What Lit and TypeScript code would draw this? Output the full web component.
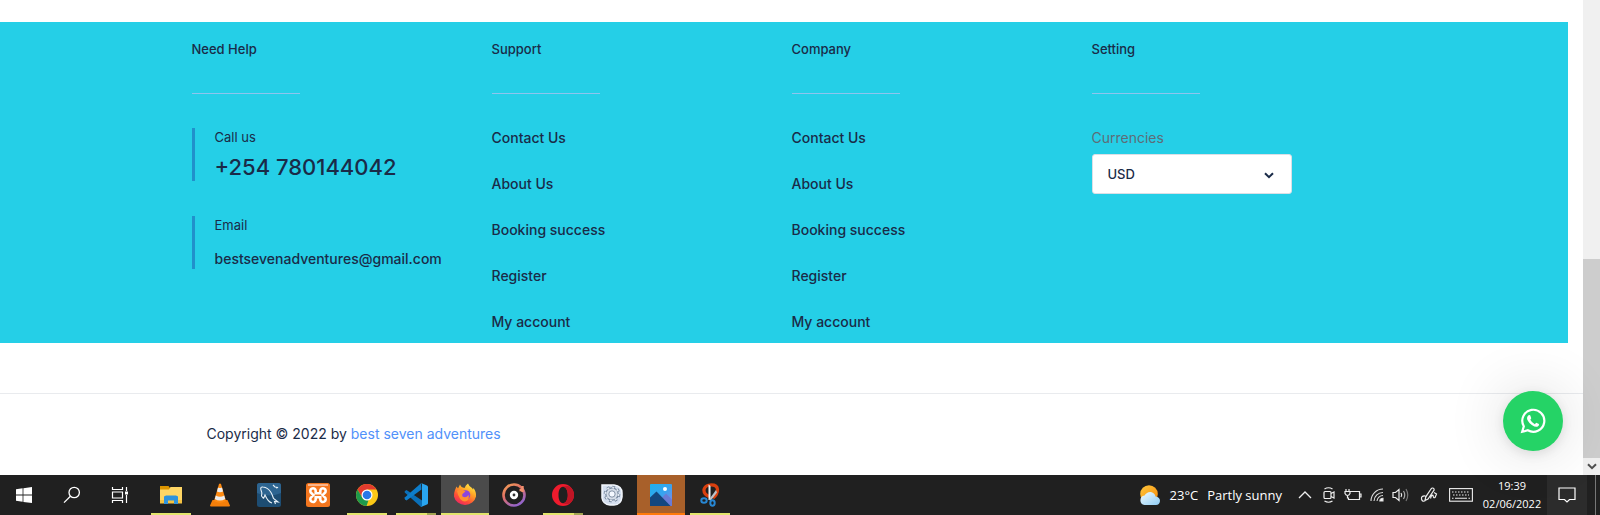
import { LitElement, html, css, svg } from "lit";
import { customElement, property } from "lit/decorators.js";
import { classMap } from "lit/directives/class-map.js";

const icons = {
  windows: svg`<svg width="16" height="16" viewBox="0 0 16 16" fill="#fff"><path d="M0 2.3 6.6 1.3V7.6H0zM7.4 1.2 16 0V7.6H7.4zM0 8.4H6.6V14.7L0 13.8zM7.4 8.4H16V16L7.4 14.9z"/></svg>`,
  search: svg`<svg width="18" height="18" viewBox="0 0 18 18" fill="none" stroke="#fff" stroke-width="1.3"><circle cx="11.2" cy="6.5" r="5.2"/><path d="M7.4 10.3 1 16.6"/></svg>`,
  taskview: svg`<svg width="18" height="16" viewBox="0 0 18 16" fill="none" stroke="#fff" stroke-width="1.2"><path d="M1.500 0V2.500H11.500V0M1.500 16V13.500H11.500V16M1.500 5H11.500V11H1.500zM15.500 0V4M15.500 8V16"/><path fill="#fff" stroke="none" d="M14 4.500h3v3h-3z"/></svg>`,
  explorer: svg`<svg width="24" height="20" viewBox="0 0 24 20"><path fill="#dc9500" d="M1 1h8.500l1.500 2v4H1z"/><path fill="#ffd665" d="M1 4.500 10 4.500 11.500 2H23V18H1z"/><path fill="#f5c242" d="M1 15h22v3.500H1z"/><path fill="#2f93dc" d="M5 19V11.500L7 10.500H17L19 11.500V19H15V15.500H9V19z"/></svg>`,
  vlc: svg`<svg width="22" height="24" viewBox="0 0 22 24"><path fill="#f57f0a" d="M3.500 17H18.500L21 22.500Q21 23.500 20 23.500H2Q1 23.500 1 22.500z"/><path fill="#ff8b12" d="M10 1Q11 0 12 1L17 18Q11 21.500 5 18z"/><path fill="#eceef0" d="M9 4.500 8 8.500Q11 10 14 8.500L13 4.500Q11 5.500 9 4.500zM6.800 12.500 5.800 16Q11 19 16.200 16L15.200 12.500Q11 15 6.800 12.500z"/></svg>`,
  mysql: svg`<svg width="24" height="24" viewBox="0 0 24 24"><rect width="24" height="24" rx="2.500" fill="#1d4d73"/><path fill="#2d6490" d="M2.500 0h19A2.500 2.500 0 0 1 24 2.500V10Q12 15 0 10V2.500A2.500 2.500 0 0 1 2.500 0z"/><path fill="none" stroke="#e8f1f8" stroke-width="1.100" d="M6.500 15.500 4.500 13Q5.500 10 4 7 3 3.500 6 4 11 4.500 14 9.500 15.500 12 16.500 15.500L21 19 17.500 18.500 18.500 21M6.500 15.500 8 12Q11 19 15 20M16 2l2 2 3 .5-2 .5"/></svg>`,
  xampp: svg`<svg width="24" height="24" viewBox="0 0 24 24"><rect width="24" height="24" rx="2.500" fill="#f3761f"/><path fill="#f9b48a" d="M2 1h20v2H2z"/><g fill="none" stroke="#fff" stroke-width="2.600"><path d="M9.700 10.300V8A2.700 2.700 0 1 0 5.500 10.200L7.300 12.100 5.500 14A2.700 2.700 0 1 0 9.700 16.200V14.200H14.300V16.200A2.700 2.700 0 1 0 18.500 14L16.700 12.100 18.500 10.200A2.700 2.700 0 1 0 14.300 8V10.300z"/></g></svg>`,
  chrome: svg`<svg width="22" height="22" viewBox="0 0 22 22"><circle cx="11" cy="11" r="11" fill="#fbc816"/><path fill="#e33b2e" d="M1.500 5.500A11 11 0 0 1 20.500 5.500H11L6.300 13.700z"/><path fill="#1d9a4c" d="M1.500 5.500 6.300 13.700Q8.500 17 12.500 16.200L10.500 22A11 11 0 0 1 1.500 5.500z"/><circle cx="11" cy="11" r="5.500" fill="#fff"/><circle cx="11" cy="11" r="4.300" fill="#2878e8"/></svg>`,
  vscode: svg`<svg width="24" height="24" viewBox="0 0 24 24"><path fill="#0a6fb8" d="M2.500 7 1 8Q0 9 1 9.800L17 24 18 23.700V17.500z"/><path fill="#0d7dcb" d="M17.500 6.500 2.500 17.500 1 16.300Q0 15.300 1 14.300L17 .2z"/><path fill="#29a5f0" d="M17 0 23 2.500Q24 3 24 4V20Q24 21 23 21.500L17 24Q18 23.500 18 22V2Q18 .5 17 0z"/></svg>`,
  firefox: svg`<svg width="24" height="24" viewBox="0 0 24 24"><defs><linearGradient id="ff" x1=".8" y1="0" x2=".2" y2="1"><stop stop-color="#fff14a"/><stop offset=".35" stop-color="#ffa726"/><stop offset=".7" stop-color="#ff4f35"/><stop offset="1" stop-color="#e9206b"/></linearGradient></defs><path fill="url(#ff)" d="M2 7 3.500 3.500 5 5.500 7 1.500Q8 4.500 11.500 5 12.500 2 15 .5 16 3.500 19 5L20 6.500 20.500 5Q23.500 9 23 13.500A11.200 10.500 0 0 1 1 13.500Q.8 10 2 7z"/><circle cx="12.500" cy="12" r="4.800" fill="#8b45dd"/><path fill="#ff9130" d="M4 8Q8 5.500 12.500 8.500L10 10.500Q8.500 11.500 9.500 13.500 13 15.500 15.500 12 17 17.500 12 18.500 6 18 4 8z"/></svg>`,
  groove: svg`<svg width="24" height="24" viewBox="0 0 24 24"><defs><linearGradient id="gr" x1="0" y1="0" x2=".6" y2="1"><stop stop-color="#f5a255"/><stop offset=".45" stop-color="#df6f65"/><stop offset="1" stop-color="#9564c8"/></linearGradient></defs><circle cx="12" cy="12" r="10.500" fill="none" stroke="url(#gr)" stroke-width="2.600"/><path fill="none" stroke="#f2916d" stroke-width="2.400" d="M17.500 7H21M20.500 3V9"/><circle cx="12" cy="12" r="2.800" fill="#333" stroke="#fff" stroke-width="2.800"/></svg>`,
  opera: svg`<svg width="22" height="22" viewBox="0 0 22 22"><path fill="#ef1b2d" fill-rule="evenodd" d="M11 0A11 11 0 1 0 11 22 11 11 0 0 0 11 0zM11 2.800C14 2.800 15.800 6.500 15.800 11S14 19.200 11 19.200 6.500 15.500 6.500 11 8 2.800 11 2.800z"/><path fill="#c01525" d="M11 2.800Q16 1 18.400 2.900 22 6.500 22 11T18.400 19.100Q16 21 11 19.200C14 19.200 15.800 15.500 15.800 11S14 2.800 11 2.800z"/></svg>`,
  gear: svg`<svg width="22" height="22" viewBox="0 0 22 22"><path fill="#d5dfef" stroke="#f2f6fc" stroke-width="1.500" d="M1 1H13Q21 2 21 9V13Q20 21 13 21H9Q2 20.500 1 14z"/><circle cx="11" cy="10" r="7" fill="none" stroke="#74859b" stroke-width="2.600" stroke-dasharray="2.750 2.750"/><circle cx="11" cy="10" r="4.800" fill="none" stroke="#74859b" stroke-width="4"/><circle cx="11" cy="10" r="6.600" fill="none" stroke="#e3e9f1" stroke-width="1.800" stroke-dasharray="2.100 3.080"/><circle cx="11" cy="10" r="4.500" fill="#f7faff" stroke="#d5dde8" stroke-width="2.200"/><circle cx="11" cy="10" r="3.200" fill="#f4f8ff" stroke="#7e8da2"/></svg>`,
  photos: svg`<svg width="22" height="22" viewBox="0 0 22 22"><defs><linearGradient id="ph" x1="0" y1="0" x2="1" y2="1"><stop stop-color="#1fb0ee"/><stop offset=".5" stop-color="#36a4ef"/><stop offset="1" stop-color="#8f82df"/></linearGradient></defs><rect width="22" height="22" rx="1" fill="url(#ph)"/><path fill="#6a7bd5" d="M10 16 16 9.500 22 15.500V22H10z"/><path fill="#14477f" d="M0 13.500 6.500 7.500 20.500 22H0z"/><circle cx="15" cy="5" r="2" fill="#fff"/></svg>`,
  snip: svg`<svg width="20" height="24" viewBox="0 0 20 24"><path fill="none" stroke="#d9400f" stroke-width="3.200" d="M9 13.500Q3.500 11 4 6.500 5 2.500 10 2 17 1.500 17.500 6.500 17.500 11.500 13 15"/><path fill="#f1f3f5" d="M8.500 1.500 10.500 3V17H8.500z"/><path fill="#b9c1c9" d="M16 7 17 9.500 10.500 18 9 16.500z"/><ellipse cx="4" cy="17.500" rx="2.700" ry="2.200" fill="none" stroke="#2787d3" stroke-width="2"/><ellipse cx="12.500" cy="20" rx="2.200" ry="2.700" fill="none" stroke="#2787d3" stroke-width="2"/></svg>`,
  weather: svg`<svg width="22" height="20" viewBox="0 0 22 20"><defs><linearGradient id="su" x1="0" y1="0" x2="1" y2="1"><stop stop-color="#ffc83d"/><stop offset="1" stop-color="#f58a0b"/></linearGradient><linearGradient id="cl" x1="0" y1="0" x2="1" y2="1"><stop stop-color="#f2fbff"/><stop offset="1" stop-color="#8fcdf5"/></linearGradient></defs><circle cx="10" cy="9" r="8.800" fill="url(#su)"/><path fill="url(#cl)" d="M5.500 20A4.800 4.800 0 0 1 5.500 10.500Q8 6.500 12 7 16 8 16.500 11.500 21 12 21 16 20.500 20 17 20z"/></svg>`,
  up: svg`<svg width="14" height="8" viewBox="0 0 14 8" fill="none" stroke="#eee" stroke-width="1.300"><path d="M1 7 7 1 13 7"/></svg>`,
  meet: svg`<svg width="12" height="16" viewBox="0 0 12 16" fill="none" stroke="#eee" stroke-width="1.200"><path d="M1.500 2Q5.500-.5 9.500 2M1.500 14Q5.500 16.500 9.500 14M8 6.500 11 5V11L8 9.500"/><rect x="1" y="4.500" width="7" height="7" rx="1"/></svg>`,
  battery: svg`<svg width="18" height="13" viewBox="0 0 18 13" fill="none" stroke="#eee" stroke-width="1.200"><path d="M6.500 2.500H15.500V10.500H4.500V8.500M15.500 5H17V8H15.500M2 0V2.500M5 0V2.500M1 2.500H6V4.500Q5 6.500 3.500 6.500 2 6.500 1 4.500zM3.500 6.500V9.500"/></svg>`,
  wifi: svg`<svg width="14" height="14" viewBox="0 0 14 14" fill="none" stroke="#ddd" stroke-width="1.100"><path d="M1 13A12 12 0 0 1 13 1M4 13A9 9 0 0 1 13 4.500M7 13A6 6 0 0 1 13 7.500"/><path d="M9.800 13A3 3 0 0 1 13 10.200V13z" fill="#fff"/></svg>`,
  volume: svg`<svg width="18" height="14" viewBox="0 0 18 14" fill="none" stroke="#eee" stroke-width="1.200"><path d="M1 4.500H3.500L7 1.500V12.500L3.500 9.500H1zM9 5Q10.500 7 9 9"/><path stroke="#aaa" d="M11.500 3Q14 7 11.500 11"/><path stroke="#777" d="M14 1Q17.500 7 14 13"/></svg>`,
  pen: svg`<svg width="18" height="16" viewBox="0 0 18 16" fill="none" stroke="#eee" stroke-width="1.200"><path d="M5.500 9Q1 8.500 1.500 12 2.500 15.500 5.500 13.500M5 13.500 5.800 9.800 11 2Q12.500 .3 13.800 1.500 14.800 2.800 13.500 4L8 12zM10.500 11.500Q11.500 7.500 13 8.300 13.300 11.500 15 10.500L16.500 7 14 5.500"/></svg>`,
  keyboard: svg`<svg width="24" height="14" viewBox="0 0 24 14" fill="none" stroke="#eee" stroke-width="1.100"><rect x=".6" y=".6" width="22.800" height="12.600"/><path stroke-dasharray="1.500 1.500" d="M3 4H21M4 7H20"/><path d="M6 10.300H18M3 10.300H4.500M19.500 10.300H21"/></svg>`,
  note: svg`<svg width="18" height="16" viewBox="0 0 18 16" fill="none" stroke="#fff" stroke-width="1.200"><path d="M1 1H17V12.500H11.500L9 15 6.500 12.500H1z"/></svg>`,
  down: svg`<svg width="10" height="7" viewBox="0 0 10 7" fill="none" stroke="currentColor" stroke-width="2"><path d="M1 1.200 5 5.200 9 1.200"/></svg>`,
  whatsapp: svg`<svg width="26" height="26" viewBox="0 0 26 26"><path fill="none" stroke="#fff" stroke-width="2.200" d="M2.200 23.800 3.800 18.300A11 11 0 1 1 7.800 22.300z"/><path fill="#fff" d="M8.500 7.300Q9.800 6.700 10.300 7.600L11.200 9.900Q11.400 10.600 10.300 11.800 12 15 14.800 16.200L16.200 14.700 19 16Q19.300 17.800 17.700 18.600 15.500 19.500 11.800 17 7 13.200 7 10 7.200 8.200 8.500 7.300z"/></svg>`,
};

interface App {
  name: string;
  icon: unknown;
  state?: "open" | "stacked" | "active" | "alert";
}

const apps: App[] = [
  { name: "File Explorer", icon: icons.explorer, state: "open" },
  { name: "VLC", icon: icons.vlc },
  { name: "MySQL Workbench", icon: icons.mysql },
  { name: "XAMPP", icon: icons.xampp },
  { name: "Chrome", icon: icons.chrome, state: "open" },
  { name: "Visual Studio Code", icon: icons.vscode, state: "stacked" },
  { name: "Firefox", icon: icons.firefox, state: "active" },
  { name: "Groove Music", icon: icons.groove },
  { name: "Opera", icon: icons.opera, state: "stacked" },
  { name: "Settings tool", icon: icons.gear },
  { name: "Photos", icon: icons.photos, state: "alert" },
  { name: "Snipping Tool", icon: icons.snip, state: "open" },
];

@customElement("task-bar")
class TaskBar extends LitElement {
  static styles = css`
    :host {
      display: flex;
      justify-content: space-between;
      height: 40px;
      background: #202020;
      color: #fff;
      font-family: "Open Sans", "Noto Sans", sans-serif;
    }
    button {
      border: 0;
      padding: 0;
      background: none;
      color: inherit;
      font: inherit;
      display: flex;
      align-items: center;
      justify-content: center;
    }
    .system,
    .apps,
    .tray {
      display: flex;
    }
    .system button,
    .apps button {
      width: 48px;
    }
    .apps {
      gap: 1px;
      margin-left: 3px;
      margin-right: auto;
    }
    .apps button {
      position: relative;
    }
    .open::after,
    .stacked::after,
    .active::after,
    .alert::after {
      content: "";
      position: absolute;
      bottom: 0;
      left: 4px;
      right: 4px;
      height: 2px;
      background: #e2e46c;
    }
    .stacked::after {
      background: linear-gradient(90deg, #e2e46c 78%, #a3a552 78%);
    }
    .apps .active {
      background: #4b4b4b;
    }
    .apps .alert {
      background: #a8602a;
    }
    .active::after,
    .alert::after {
      left: 0;
      right: 0;
    }
    .alert::after {
      background: #ff7a0a;
    }
    .tray .weather {
      gap: 9px;
      padding-right: 11px;
      font-size: 13px;
    }
    .tray .icon {
      width: 24px;
    }
    .tray .wide {
      width: 32px;
    }
    .tray .clock {
      width: 70px;
      flex-direction: column;
      font-size: 11px;
      line-height: 18px;
    }
    .tray .note {
      width: 40px;
      margin-right: 8px;
      background: #2c2c2c;
    }
    .tray .desktop {
      width: 5px;
      border-left: 1px solid #777;
    }
  `;

  render() {
    return html`
      <div class="system">
        <button aria-label="Start">${icons.windows}</button>
        <button aria-label="Search">${icons.search}</button>
        <button aria-label="Task view">${icons.taskview}</button>
      </div>
      <div class="apps">
        ${apps.map(
          (a) => html`<button aria-label=${a.name} class=${classMap({ [a.state ?? "idle"]: true })}>${a.icon}</button>`
        )}
      </div>
      <div class="tray">
        <button class="weather">${icons.weather}<span>23°C</span><span>Partly sunny</span></button>
        <button class="icon" aria-label="Hidden icons">${icons.up}</button>
        <button class="icon" aria-label="Meet now">${icons.meet}</button>
        <button class="icon" aria-label="Battery">${icons.battery}</button>
        <button class="icon" aria-label="Network">${icons.wifi}</button>
        <button class="icon" aria-label="Volume">${icons.volume}</button>
        <button class="wide" aria-label="Pen">${icons.pen}</button>
        <button class="wide" aria-label="Touch keyboard">${icons.keyboard}</button>
        <button class="clock"><span>19:39</span><span>02/06/2022</span></button>
        <button class="note" aria-label="Notifications">${icons.note}</button>
        <button class="desktop" aria-label="Show desktop"></button>
      </div>
    `;
  }
}

@customElement("footer-column")
class FooterColumn extends LitElement {
  @property() heading = "";

  static styles = css`
    :host {
      display: block;
    }
    h2 {
      margin: 0;
      padding-bottom: 32px;
      font-size: 13px;
      line-height: 18px;
      font-weight: 500;
    }
    h2::after {
      content: "";
      display: block;
      width: 108px;
      height: 1px;
      margin-top: 35px;
      background: #8fc4ee;
    }
  `;

  render() {
    return html`<h2>${this.heading}</h2>
      <slot></slot>`;
  }
}

@customElement("app-root")
class AppRoot extends LitElement {
  static styles = css`
    :host {
      display: flex;
      flex-direction: column;
      min-height: 100vh;
      background: #fff;
      color: #1a2b48;
      font-family: Inter, sans-serif;
      font-size: 14px;
    }
    .view {
      flex: 1;
      display: flex;
      position: relative;
    }
    .page {
      flex: 1;
      padding-top: 22px;
    }
    .band {
      margin-right: 15px;
      padding: 18px 0 9px 15px;
      background: #25cfe7;
    }
    .columns {
      max-width: 1200px;
      margin: 0 auto;
      display: grid;
      grid-template-columns: repeat(4, 1fr);
    }
    .contact {
      border-left: 3px solid #2191cb;
      padding-left: 20px;
      margin: 2px 0 35px;
      display: grid;
      gap: 7px;
    }
    .contact:last-child {
      gap: 15px;
      margin-bottom: 0;
    }
    .caption {
      font-size: 13px;
      line-height: 18px;
    }
    a {
      color: inherit;
      text-decoration: none;
    }
    .contact a {
      font-weight: 500;
      line-height: 20px;
    }
    .contact .phone {
      font-size: 22px;
      line-height: 28px;
    }
    .links {
      list-style: none;
      margin: 0;
      padding: 0;
      display: grid;
      gap: 22px;
      font-weight: 500;
      line-height: 24px;
    }
    .label {
      display: block;
      color: #5e6d77;
      line-height: 24px;
      margin-bottom: 4px;
    }
    .picker {
      position: relative;
      width: 200px;
    }
    select {
      appearance: none;
      width: 100%;
      height: 40px;
      padding: 0 15px;
      border: 1px solid #dadfe6;
      border-radius: 3px;
      background: #fff;
      color: inherit;
      font: 500 13px Inter, sans-serif;
    }
    .picker svg {
      position: absolute;
      right: 18px;
      top: 18px;
      pointer-events: none;
    }
    .legal {
      margin-top: 50px;
      border-top: 1px solid #e9ebee;
      padding: 28px 0 29px;
    }
    .legal p {
      box-sizing: border-box;
      max-width: 1200px;
      margin: 0 auto;
      padding: 0 15px;
      line-height: 24px;
    }
    .legal a {
      color: #5191fa;
    }
    .scrollbar {
      width: 17px;
      display: grid;
      grid-template-rows: 1fr 42% 17px;
      background: #f0f0f0;
      color: #505050;
    }
    .thumb {
      grid-row: 2;
      background: #cdcdcd;
    }
    .arrow {
      grid-row: 3;
      display: grid;
      place-items: center;
    }
    .chat {
      position: absolute;
      right: 37px;
      bottom: 24px;
      width: 60px;
      height: 60px;
      border-radius: 50%;
      background: #25d366;
      box-shadow: 0 0 60px rgba(0, 0, 0, 0.16), 0 3px 12px rgba(0, 0, 0, 0.1);
      display: grid;
      place-items: center;
    }
  `;

  private links() {
    const items = ["Contact Us", "About Us", "Booking success", "Register", "My account"];
    return html`<ul class="links">
      ${items.map((t) => html`<li><a href="#">${t}</a></li>`)}
    </ul>`;
  }

  render() {
    return html`
      <div class="view">
        <footer class="page">
          <div class="band">
            <div class="columns">
              <footer-column heading="Need Help">
                <div class="contact">
                  <span class="caption">Call us</span>
                  <a class="phone" href="tel:+254780144042">+254 780144042</a>
                </div>
                <div class="contact">
                  <span class="caption">Email</span>
                  <a href="mailto:bestsevenadventures@gmail.com">bestsevenadventures@gmail.com</a>
                </div>
              </footer-column>
              <footer-column heading="Support">${this.links()}</footer-column>
              <footer-column heading="Company">${this.links()}</footer-column>
              <footer-column heading="Setting">
                <label class="label" for="currency">Currencies</label>
                <div class="picker">
                  <select id="currency">
                    <option>USD</option>
                  </select>
                  ${icons.down}
                </div>
              </footer-column>
            </div>
          </div>
          <div class="legal">
            <p>Copyright © 2022 by <a href="#">best seven adventures</a></p>
          </div>
        </footer>
        <div class="scrollbar" aria-hidden="true">
          <div class="thumb"></div>
          <div class="arrow">${icons.down}</div>
        </div>
        <a class="chat" href="#" aria-label="Chat on WhatsApp">${icons.whatsapp}</a>
      </div>
      <task-bar></task-bar>
    `;
  }
}
